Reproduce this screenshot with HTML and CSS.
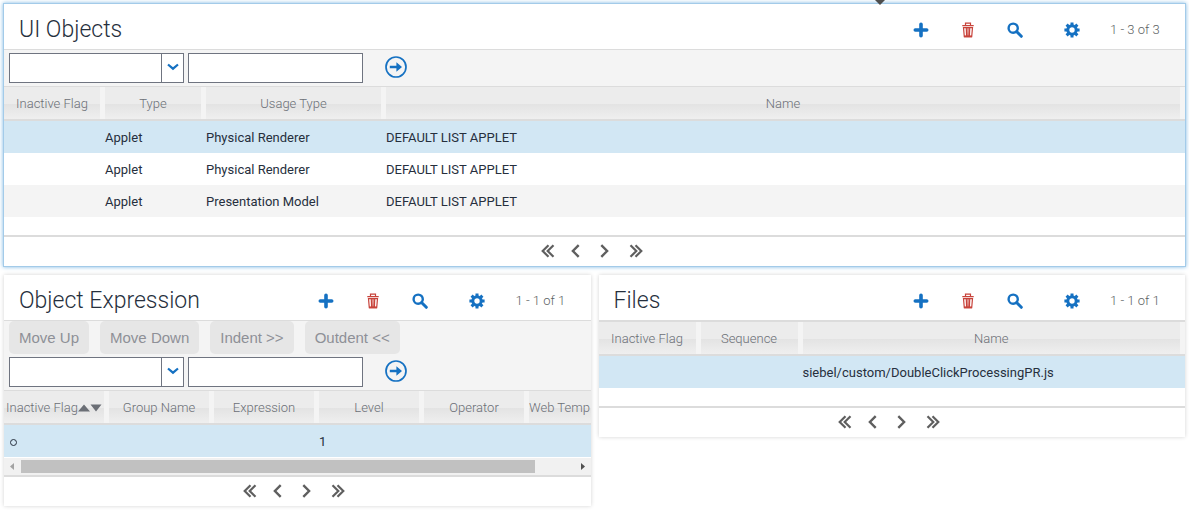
FILE: index.html
```html
<!DOCTYPE html>
<html lang="en">
<head>
<meta charset="utf-8">
<title>UI Objects</title>
<link rel="stylesheet" href="styles.css">
</head>
<body>
<svg class="defs" aria-hidden="true">
  <symbol id="i-plus" viewBox="0 0 16 16"><path d="M8 2.300v11.400M2.300 8h11.400" fill="none" stroke="currentColor" stroke-width="3.600" stroke-linecap="round"/></symbol>
  <symbol id="i-trash" viewBox="0 0 16 16"><path d="M5.500 3V1.200h5V3M2.300 3.600h11.400M3.500 5.600l.8 9.100h7.400l.8-9.100zM6.300 6l.3 8M8 6v8M9.700 6l-.3 8" fill="none" stroke="currentColor" stroke-width="1.200"/><path d="M4 13.400h8v1.900H4z" fill="currentColor"/></symbol>
  <symbol id="i-search" viewBox="0 0 16 16"><circle cx="6.200" cy="6.200" r="4.600" fill="none" stroke="currentColor" stroke-width="2.400"/><path d="M9.800 9.800l4.500 4.500" stroke="currentColor" stroke-width="3" stroke-linecap="round"/></symbol>
  <symbol id="i-gear" viewBox="0 0 16 16"><circle cx="8" cy="8" r="4.200" fill="none" stroke="currentColor" stroke-width="3"/><path d="M8 .4v3M8 12.600v3M.4 8h3M12.600 8h3M2.600 2.600l2 2M11.400 11.400l2 2M2.600 13.400l2-2M11.400 4.600l2-2" stroke="currentColor" stroke-width="3"/></symbol>
  <symbol id="i-go" viewBox="0 0 22 22"><circle cx="11" cy="11" r="10" fill="none" stroke="currentColor" stroke-width="1.700"/><path d="M4.800 9.800h6.600V6.200L17 11l-5.600 4.800v-3.600H4.800z" fill="currentColor"/></symbol>
  <symbol id="i-down" viewBox="0 0 12 8"><path d="M1 1.500l5 4.200 5-4.200" fill="none" stroke="currentColor" stroke-width="2.200"/></symbol>
  <symbol id="i-first" viewBox="0 0 14 14"><path d="M7.500 1.200L1.700 7l5.800 5.800M12.500 1.200L6.700 7l5.800 5.800" fill="none" stroke="currentColor" stroke-width="2.200"/></symbol>
  <symbol id="i-prev" viewBox="0 0 14 14"><path d="M9.700 1.200L3.900 7l5.800 5.800" fill="none" stroke="currentColor" stroke-width="2.400"/></symbol>
  <symbol id="i-next" viewBox="0 0 14 14"><path d="M4.300 1.200L10.100 7l-5.800 5.800" fill="none" stroke="currentColor" stroke-width="2.400"/></symbol>
  <symbol id="i-last" viewBox="0 0 14 14"><path d="M1.500 1.200L7.300 7l-5.800 5.800M6.500 1.200L12.300 7l-5.800 5.800" fill="none" stroke="currentColor" stroke-width="2.200"/></symbol>
</svg>

<span class="pointer"></span>

<main class="screen">
  <section class="applet applet-active">
    <header class="applet-head">
      <h2>UI Objects</h2>
      <div class="tools">
        <button aria-label="New"><svg><use href="#i-plus"/></svg></button>
        <button class="delete" aria-label="Delete"><svg><use href="#i-trash"/></svg></button>
        <button aria-label="Query"><svg><use href="#i-search"/></svg></button>
        <button class="menu" aria-label="Menu"><svg><use href="#i-gear"/></svg></button>
      </div>
      <span class="counter">1 - 3 of 3</span>
    </header>
    <div class="filter">
      <div class="combo">
        <select aria-label="Find field"><option></option></select>
        <svg><use href="#i-down"/></svg>
      </div>
      <input type="text" aria-label="Find value">
      <button class="go" aria-label="Go"><svg><use href="#i-go"/></svg></button>
    </div>
    <table class="objects">
      <thead><tr><th class="c-flag">Inactive Flag</th><th class="c-type">Type</th><th class="c-usage">Usage Type</th><th>Name</th></tr></thead>
      <tbody>
        <tr class="selected"><td></td><td>Applet</td><td>Physical Renderer</td><td>DEFAULT LIST APPLET</td></tr>
        <tr><td></td><td>Applet</td><td>Physical Renderer</td><td>DEFAULT LIST APPLET</td></tr>
        <tr class="odd"><td></td><td>Applet</td><td>Presentation Model</td><td>DEFAULT LIST APPLET</td></tr>
      </tbody>
    </table>
    <div class="spare"></div>
    <nav class="pager" aria-label="UI Objects records">
      <button aria-label="First"><svg><use href="#i-first"/></svg></button>
      <button aria-label="Previous"><svg><use href="#i-prev"/></svg></button>
      <button aria-label="Next"><svg><use href="#i-next"/></svg></button>
      <button class="last" aria-label="Last"><svg><use href="#i-last"/></svg></button>
    </nav>
  </section>

  <div class="pair">
    <section class="applet">
      <header class="applet-head">
        <h2>Object Expression</h2>
        <div class="tools">
          <button aria-label="New"><svg><use href="#i-plus"/></svg></button>
          <button class="delete" aria-label="Delete"><svg><use href="#i-trash"/></svg></button>
          <button aria-label="Query"><svg><use href="#i-search"/></svg></button>
          <button class="menu" aria-label="Menu"><svg><use href="#i-gear"/></svg></button>
        </div>
        <span class="counter">1 - 1 of 1</span>
      </header>
      <div class="actions">
        <button disabled>Move Up</button>
        <button disabled>Move Down</button>
        <button disabled>Indent &gt;&gt;</button>
        <button disabled>Outdent &lt;&lt;</button>
      </div>
      <div class="filter">
        <div class="combo">
          <select aria-label="Find field"><option></option></select>
          <svg><use href="#i-down"/></svg>
        </div>
        <input type="text" aria-label="Find value">
        <button class="go" aria-label="Go"><svg><use href="#i-go"/></svg></button>
      </div>
      <div class="clip">
        <table class="expressions">
          <thead><tr><th><span class="sortable">Inactive Flag<svg viewBox="0 0 24 8"><path d="M0 7.500L6 .5l6 7zM12.500.5h11l-5.500 7z" fill="#6b6f76"/></svg></span></th><th>Group Name</th><th>Expression</th><th>Level</th><th>Operator</th><th class="cut">Web Temp</th></tr></thead>
          <tbody><tr class="selected"><td><span class="flag"></span></td><td></td><td></td><td>1</td><td></td><td></td></tr></tbody>
        </table>
      </div>
      <div class="scrollbar">
        <svg viewBox="0 0 17 17"><path d="M10 5v7L6 8.500z" fill="#a3a3a3"/></svg>
        <div class="track"><div class="thumb"></div></div>
        <svg viewBox="0 0 17 17"><path d="M7 5v7l4-3.500z" fill="#505050"/></svg>
      </div>
      <nav class="pager" aria-label="Object Expression records">
        <button aria-label="First"><svg><use href="#i-first"/></svg></button>
        <button aria-label="Previous"><svg><use href="#i-prev"/></svg></button>
        <button aria-label="Next"><svg><use href="#i-next"/></svg></button>
        <button class="last" aria-label="Last"><svg><use href="#i-last"/></svg></button>
      </nav>
    </section>

    <section class="applet">
      <header class="applet-head">
        <h2>Files</h2>
        <div class="tools">
          <button aria-label="New"><svg><use href="#i-plus"/></svg></button>
          <button class="delete" aria-label="Delete"><svg><use href="#i-trash"/></svg></button>
          <button aria-label="Query"><svg><use href="#i-search"/></svg></button>
          <button class="menu" aria-label="Menu"><svg><use href="#i-gear"/></svg></button>
        </div>
        <span class="counter">1 - 1 of 1</span>
      </header>
      <table class="files">
        <thead><tr><th class="c-file">Inactive Flag</th><th class="c-file">Sequence</th><th>Name</th></tr></thead>
        <tbody><tr class="selected"><td></td><td></td><td>siebel/custom/DoubleClickProcessingPR.js</td></tr></tbody>
      </table>
      <div class="spare"></div>
      <nav class="pager" aria-label="Files records">
        <button aria-label="First"><svg><use href="#i-first"/></svg></button>
        <button aria-label="Previous"><svg><use href="#i-prev"/></svg></button>
        <button aria-label="Next"><svg><use href="#i-next"/></svg></button>
        <button class="last" aria-label="Last"><svg><use href="#i-last"/></svg></button>
      </nav>
    </section>
  </div>
</main>
</body>
</html>
```

FILE: styles.css
```css
* { box-sizing: border-box; }

body {
  margin: 0;
  background: #fff;
  color: #262f3d;
  font: 13px/16px Roboto, "Liberation Sans", sans-serif;
}

button {
  border: 0;
  padding: 0;
  background: none;
  color: #1571c2;
  font: inherit;
}

.defs { position: absolute; width: 0; height: 0; }

.pointer {
  position: absolute;
  top: 0;
  left: 74%;
  margin-left: -5px;
  border: 5px solid transparent;
  border-top-color: #4d4d4d;
  border-bottom: 0;
}

.screen {
  display: flex;
  flex-direction: column;
  gap: 9px;
  padding: 4px;
}

.pair {
  display: grid;
  grid-template-columns: minmax(0, 1fr) minmax(0, 1fr);
  gap: 8px;
  align-items: start;
}

.applet {
  background: #fff;
  box-shadow: 0 0 4px rgba(0, 0, 0, 0.18);
}

.applet-active { box-shadow: 0 0 0 1px #a3cbe9, 0 0 4px 1px #7fb9e3; }

.applet-head {
  display: flex;
  align-items: center;
  height: 45px;
  padding: 7px 25px 0 15px;
}

h2 {
  flex: 1;
  margin: 0;
  font-size: 23px;
  line-height: 28px;
  font-weight: 300;
}

.tools { display: flex; color: #1571c2; }
.tools button { width: 47px; height: 20px; display: grid; place-items: center; }
.tools svg { width: 16px; height: 16px; }
.tools .delete { color: #c8433b; }
.tools .menu { margin-left: 10px; }

.counter {
  width: 65px;
  padding-left: 15px;
  white-space: nowrap;
  font-weight: 300;
  color: #5c5f63;
}

.actions {
  display: flex;
  gap: 11px;
  padding: 0 5px;
  border-top: 1px solid #dcdcdc;
  background: #f4f4f4;
}

.actions button {
  height: 33px;
  padding: 0 10px;
  border-radius: 5px;
  background: #e6e6e6;
  color: #8e9097;
  font: 15px/18px "Liberation Sans", Arial, sans-serif;
}

.filter {
  display: flex;
  align-items: center;
  gap: 4px;
  padding: 3px 5px;
  border-top: 1px solid #dcdcdc;
  background: #f4f4f4;
}

.actions + .filter { border-top: 0; }

.combo { position: relative; width: 175px; }

.combo select,
.filter input {
  display: block;
  width: 175px;
  height: 30px;
  border: 1px solid #6f7480;
  border-radius: 0;
  background: #fff;
  font: inherit;
}

.combo select { width: 100%; appearance: none; }

.combo svg {
  position: absolute;
  top: 0;
  right: 0;
  width: 23px;
  height: 30px;
  padding: 10px 5px 12px;
  border-left: 1px solid #6f7480;
  color: #1571c2;
  pointer-events: none;
}

.go { width: 22px; height: 22px; margin: 0 0 2px 18px; }
.go svg { display: block; width: 22px; height: 22px; }

table {
  width: 100%;
  border-top: 1px solid #dcdcdc;
  border-spacing: 0;
  table-layout: fixed;
}

.files { border-top-width: 2px; }
.expressions { width: 630px; }

.c-flag, .c-type { width: 101px; }
.c-usage { width: 180px; }
.c-file { width: 102px; }

th {
  height: 34px;
  padding: 2px 5px 0 0;
  border-bottom: 2px solid #dcdcdc;
  background: linear-gradient(#ececec 0 17px, #e3e3e3 17px, #efefef 32px);
  box-shadow: inset -5px 0 #f4f4f4;
  color: #6b6f76;
  font-weight: 300;
  white-space: nowrap;
}

.cut { text-align: left; }

.sortable { display: inline-flex; align-items: center; }
.sortable svg { width: 24px; height: 8px; }

td { height: 32px; padding: 2px 0 0; }
.selected td { background: #d2e7f4; }
.odd td { background: #f4f4f4; }

.flag {
  display: block;
  width: 7px;
  height: 7px;
  margin-left: 6px;
  border: 1px solid #262f3d;
  border-radius: 50%;
}

.clip { overflow: hidden; }
.spare { height: 18px; }

.scrollbar {
  display: flex;
  height: 17px;
  margin-top: 1px;
  background: #f1f1f1;
}

.scrollbar svg { width: 17px; height: 17px; }
.track { flex: 1; padding: 2px 0; }
.thumb { width: 93%; height: 13px; background: #c1c1c1; }

.pager {
  display: flex;
  justify-content: center;
  height: 31px;
  padding: 0 2px 2px 0;
  border-top: 2px solid #dcdcdc;
}

.pager button {
  width: 28px;
  display: grid;
  place-items: center;
  color: #5f5f5f;
}

.pager .last { width: 36px; }
.pager svg { width: 14px; height: 14px; }
```
